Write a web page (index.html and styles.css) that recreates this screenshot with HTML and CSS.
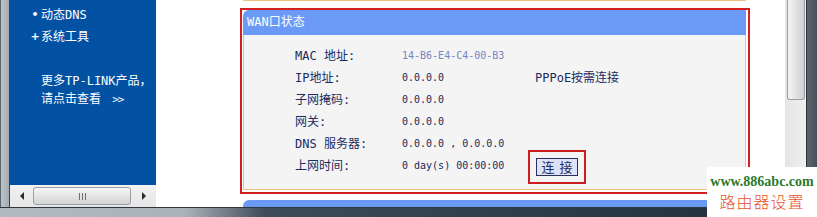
FILE: index.html
```html
<!DOCTYPE html>
<html lang="zh">
<head>
<meta charset="utf-8">
<title>WAN口状态</title>
<link rel="stylesheet" href="styles.css">
</head>
<body>
<div class="window">
  <div class="main">
    <div class="frame-left"></div>
    <div class="sidebar">
      <div class="side-blue">
        <div class="side-item"><span class="mark dot">•</span><span class="mx">动态DNS</span></div>
        <div class="side-item"><span class="mark plus">+</span><span class="mx">系统工具</span></div>
        <div class="side-more">
          <div class="mx">更多TP-LINK产品，</div>
          <div class="mx">请点击查看 <span class="chev">&gt;&gt;</span></div>
        </div>
      </div>
      <div class="hscroll">
        <div class="arrow-cell"><span class="tri-left"></span></div>
        <div class="hthumb">
          <svg width="7" height="7" viewBox="0 0 7 7"><path d="M0.5 0v7M3.5 0v7M6.5 0v7" stroke="#6a6e72" stroke-width="1"/></svg>
        </div>
        <div class="arrow-cell right"><span class="tri-right"></span></div>
      </div>
    </div>
    <div class="content">
      <div class="prev-line"></div>
      <div class="redbox">
        <div class="panel">
          <div class="panel-head mx">WAN口状态</div>
          <div class="panel-body">
            <div class="row"><span class="lbl">MAC 地址:</span><span class="val mac">14-B6-E4-C4-00-B3</span><span></span></div>
            <div class="row"><span class="lbl">IP地址:</span><span class="val">0.0.0.0</span><span class="lbl">PPPoE按需连接</span></div>
            <div class="row"><span class="lbl">子网掩码:</span><span class="val">0.0.0.0</span><span></span></div>
            <div class="row"><span class="lbl">网关:</span><span class="val">0.0.0.0</span><span></span></div>
            <div class="row"><span class="lbl">DNS 服务器:</span><span class="val">0.0.0.0 , 0.0.0.0</span><span></span></div>
            <div class="row"><span class="lbl">上网时间:</span><span class="val">0 day(s) 00:00:00</span><span><button class="btn" type="button">连 接</button></span></div>
          </div>
        </div>
      </div>
      <div class="next-head"></div>
    </div>
    <div class="vscroll"><div class="vthumb"></div></div>
    <div class="frame-right"></div>
  </div>
  <div class="frame-bottom"></div>
</div>
<div class="watermark">
  <div class="wm-url">www.886abc.com</div>
  <div class="wm-cn">路由器设置</div>
</div>
</body>
</html>
```

FILE: styles.css
```css
html, body {
  margin: 0;
  padding: 0;
}
body {
  width: 817px;
  height: 217px;
  overflow: hidden;
  position: relative;
  font-family: "Noto Sans CJK SC", sans-serif;
  font-size: 12px;
  background: #fff;
}
.mx {
  font-family: "DejaVu Sans Mono", "Noto Sans CJK SC", monospace;
}
.window {
  display: flex;
  flex-direction: column;
  height: 217px;
}
.main {
  display: flex;
  height: 207px;
}
.frame-left {
  width: 8px;
  background: linear-gradient(to right, #bcc4ca, #a4acb3);
  border-left: 1px solid #5c646b;
  border-right: 1px solid #3b444c;
}
.sidebar {
  width: 146px;
  display: flex;
  flex-direction: column;
}
.side-blue {
  height: 185px;
  background: #0251a3;
  color: #fff;
  padding-top: 4px;
  box-sizing: border-box;
}
.side-item {
  display: flex;
  align-items: center;
  height: 22px;
  line-height: 22px;
  padding-left: 19px;
  font-size: 12px;
}
.mark {
  width: 12px;
  text-align: center;
  font-family: "DejaVu Sans", sans-serif;
  font-weight: bold;
  font-size: 11px;
}
.mark.plus {
  font-size: 11px;
}
.side-more {
  padding-left: 31px;
  margin-top: 24px;
  line-height: 18px;
  font-size: 12px;
}
.chev {
  letter-spacing: -1px;
  margin-left: 4px;
  font-size: 11px;
}
.hscroll {
  height: 22px;
  display: flex;
  align-items: center;
  background: linear-gradient(#f2f2f2, #e6e6e6);
}
.arrow-cell {
  width: 23px;
  display: flex;
  justify-content: center;
}
.arrow-cell.right {
  width: 25px;
}
.tri-left {
  width: 0;
  height: 0;
  border-top: 4px solid transparent;
  border-bottom: 4px solid transparent;
  border-right: 4px solid #2a2a2a;
}
.tri-right {
  width: 0;
  height: 0;
  border-top: 4px solid transparent;
  border-bottom: 4px solid transparent;
  border-left: 4px solid #2a2a2a;
}
.hthumb {
  width: 98px;
  height: 18px;
  box-sizing: border-box;
  border: 1px solid #9aa0a6;
  border-radius: 3px;
  background: linear-gradient(#f7f7f7, #e4e4e4 50%, #d4d4d4);
  display: flex;
  align-items: center;
  justify-content: center;
}
.content {
  width: 629px;
  background: #fff;
  overflow: hidden;
  padding-left: 84px;
  box-sizing: border-box;
}
.prev-line {
  margin-left: 3px;
  width: 503px;
  height: 1px;
  background: #f0c27e;
  margin-bottom: 7px;
}
.redbox {
  width: 510px;
  height: 186px;
  box-sizing: border-box;
  border: 2px solid #d21f1f;
  padding: 0 2px 0 1px;
}
.panel {
  width: 503px;
  height: 180px;
  display: flex;
  flex-direction: column;
}
.panel-head {
  height: 25px;
  line-height: 25px;
  background: #6a9af5;
  color: #fff;
  border-top-left-radius: 6px;
  padding-left: 4px;
  font-size: 12px;
}
.panel-body {
  flex: 1;
  background: #f4f4f4;
  border: 1px solid #f0c27e;
  border-top: none;
  padding-top: 10px;
  padding-left: 51px;
}
.row {
  display: grid;
  grid-template-columns: 107px 133px auto;
  align-items: center;
  height: 22px;
  line-height: 22px;
  color: #1b2b5e;
}
.lbl {
  font-family: "DejaVu Sans Mono", "Noto Sans CJK SC", monospace;
  font-size: 12px;
}
.val {
  font-family: "DejaVu Sans Mono", monospace;
  font-size: 10px;
}
.val.mac {
  color: #7784c4;
}
.btn {
  margin-left: 1px;
  margin-top: 1px;
  width: 42px;
  height: 18px;
  box-sizing: border-box;
  padding: 0;
  background: #dde2f9;
  border: 1px solid #2b2f5e;
  color: #1b2b5e;
  font-family: "Noto Sans CJK SC", sans-serif;
  font-size: 13px;
  line-height: 16px;
  word-spacing: 2px;
  outline: 2px solid #cc1e1e;
  outline-offset: 6px;
  display: block;
}
.next-head {
  margin-left: 3px;
  margin-top: 6px;
  width: 503px;
  height: 25px;
  background: #6a9af5;
  border-top-left-radius: 6px;
}
.vscroll {
  width: 21px;
  background: linear-gradient(to right, #e4e4e4, #f0f0f0);
}
.vthumb {
  margin: 0 1px 0 2px;
  height: 100px;
  box-sizing: border-box;
  border: 1px solid #9a9ea3;
  border-top: none;
  border-radius: 0 0 3px 3px;
  background: linear-gradient(to right, #f4f4f4, #e2e2e2 50%, #cfcfcf);
}
.frame-right {
  width: 10px;
  background: linear-gradient(to right, #5a6570, #46515c);
  border-left: 1px solid #2a3138;
}
.frame-bottom {
  height: 10px;
  box-sizing: border-box;
  border-top: 1px solid #2f373e;
  background: linear-gradient(to right, #b2bac1 0, #aab2b9 185px, #3e4b58 265px, #1f2c39 100%);
}
.watermark {
  position: absolute;
  right: 0;
  bottom: 0;
  width: 110px;
  height: 50px;
  background: #fff;
  text-align: center;
}
.wm-url {
  font-family: "Liberation Serif", serif;
  font-weight: bold;
  font-size: 14px;
  color: #2b7a2b;
  line-height: 16px;
  margin-top: 7px;
}
.wm-cn {
  font-family: "Noto Sans CJK SC", sans-serif;
  font-weight: 300;
  font-size: 16px;
  letter-spacing: 1px;
  color: #e6502c;
  line-height: 22px;
}
```
